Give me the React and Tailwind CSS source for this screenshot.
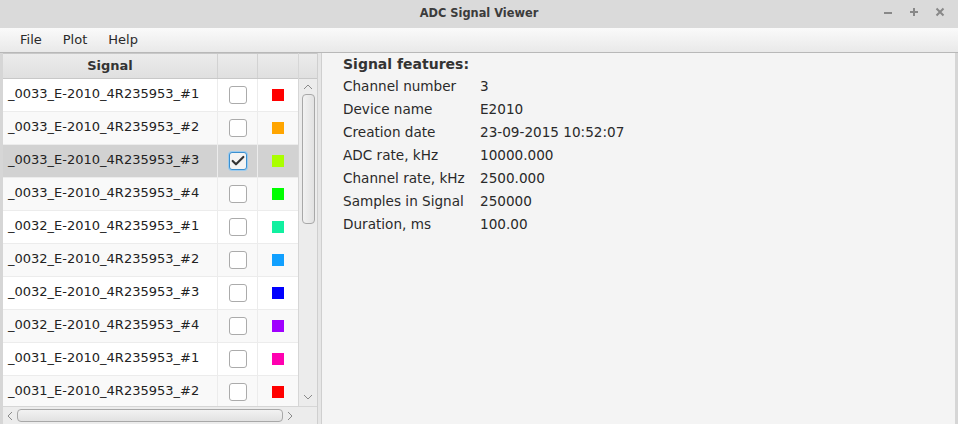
import { Check } from "lucide-react";

const signals = [
  { name: "_0033_E-2010_4R235953_#1", color: "#ff0000" },
  { name: "_0033_E-2010_4R235953_#2", color: "#ffa500" },
  { name: "_0033_E-2010_4R235953_#3", color: "#aaff00", selected: true },
  { name: "_0033_E-2010_4R235953_#4", color: "#00ff00" },
  { name: "_0032_E-2010_4R235953_#1", color: "#11f0a0" },
  { name: "_0032_E-2010_4R235953_#2", color: "#11a0ff" },
  { name: "_0032_E-2010_4R235953_#3", color: "#0000ff" },
  { name: "_0032_E-2010_4R235953_#4", color: "#a000ff" },
  { name: "_0031_E-2010_4R235953_#1", color: "#ff00b0" },
  { name: "_0031_E-2010_4R235953_#2", color: "#ff0000" },
];

const features = [
  ["Channel number", "3"],
  ["Device name", "E2010"],
  ["Creation date", "23-09-2015 10:52:07"],
  ["ADC rate, kHz", "10000.000"],
  ["Channel rate, kHz", "2500.000"],
  ["Samples in Signal", "250000"],
  ["Duration, ms", "100.00"],
];

const Chevron = ({ dir }) => {
  const d = {
    up: "M1 5 L5 1 L9 5",
    down: "M1 1 L5 5 L9 1",
    left: "M5 1 L1 5 L5 9",
    right: "M1 1 L5 5 L1 9",
  }[dir];
  const vertical = dir === "up" || dir === "down";
  return (
    <svg
      width={vertical ? 10 : 6}
      height={vertical ? 6 : 10}
      viewBox={vertical ? "0 0 10 6" : "0 0 6 10"}
      fill="none"
      stroke="#8a8a8a"
      strokeWidth="1"
    >
      <path d={d} />
    </svg>
  );
};

export default function App() {
  return (
    <div
      className="w-[958px] h-[424px] flex flex-col overflow-hidden bg-[#f2f2f2] text-[13px] text-[#222]"
      style={{ fontFamily: '"DejaVu Sans", sans-serif' }}
    >
      {/* Title bar */}
      <div className="h-[28px] shrink-0 flex items-center bg-[#dadada] relative">
        <div className="flex-1 text-center font-bold text-[11.4px] text-[#3c3c3c]">
          ADC Signal Viewer
        </div>
        <div className="absolute right-[12px] top-[6px] flex items-center gap-[14px] text-[#888] font-bold">
          <svg width="12" height="12" viewBox="0 0 12 12">
            <path d="M2 7 H10" stroke="#888" strokeWidth="2" />
          </svg>
          <svg width="12" height="12" viewBox="0 0 12 12">
            <path d="M2 6 H10 M6 2 V10" stroke="#888" strokeWidth="2" />
          </svg>
          <svg width="12" height="12" viewBox="0 0 12 12">
            <path d="M2.5 2.5 L9.5 9.5 M9.5 2.5 L2.5 9.5" stroke="#888" strokeWidth="2" />
          </svg>
        </div>
      </div>

      {/* Menu bar */}
      <div className="h-[25px] shrink-0 flex items-center gap-[21px] pl-[20px] bg-gradient-to-b from-[#fafafa] to-[#e9e9e9] border-b border-[#b8b8b8] text-[13px] text-[#2a2a2a]">
        <span>File</span>
        <span>Plot</span>
        <span>Help</span>
      </div>

      {/* Content */}
      <div className="flex-1 flex min-h-0">
        {/* Left table */}
        <div className="w-[317px] shrink-0 flex flex-col border-l-[3px] border-[#d6d6d6] bg-white">
          <div className="flex flex-1 min-h-0">
            <div className="w-[295px] flex flex-col">
              {/* Header */}
              <div className="h-[26px] shrink-0 flex bg-gradient-to-b from-[#ececec] to-[#e0e0e0] border-b border-[#c8c8c8] border-t border-t-[#c8c8c8]">
                <div className="w-[215px] flex items-center justify-center font-bold text-[#333] border-r border-[#d2d2d2]">
                  Signal
                </div>
                <div className="w-[40px] border-r border-[#d2d2d2]" />
                <div className="w-[40px]" />
              </div>
              {signals.map((s, i) => (
                <div
                  key={i}
                  className={`h-[33px] shrink-0 flex border-b border-[#ececec] ${
                    s.selected ? "bg-[#d2d2d2]" : i % 2 ? "bg-[#f9f9f9]" : "bg-white"
                  }`}
                >
                  <div className="w-[215px] flex items-center pl-[5px] pb-[2px] text-[13px] text-[#222] border-r border-[#ececec] whitespace-nowrap">
                    {s.name}
                  </div>
                  <div className="w-[40px] flex items-center justify-center border-r border-[#ececec]">
                    <div
                      className={`w-[18px] h-[18px] rounded-[3px] flex items-center justify-center ${
                        s.selected
                          ? "border border-[#3a8fd0] bg-[#f4f4f4] shadow-[0_0_0_1px_#9ccbee]"
                          : "border border-[#ababab] bg-white"
                      }`}
                    >
                      {s.selected && <Check size={16} strokeWidth={3.2} color="#333" />}
                    </div>
                  </div>
                  <div className="w-[40px] flex items-center justify-center">
                    <div className="w-[12px] h-[12px]" style={{ backgroundColor: s.color }} />
                  </div>
                </div>
              ))}
            </div>
            {/* Vertical scrollbar */}
            <div className="w-[19px] flex flex-col items-center bg-[#ececec] border-l border-[#d6d6d6]">
              <div className="h-[26px] w-full bg-gradient-to-b from-[#ececec] to-[#e0e0e0] border-b border-[#c8c8c8] border-t border-t-[#c8c8c8]" />
              <div className="h-[12px] flex items-center justify-center mt-[2px]">
                <Chevron dir="up" />
              </div>
              <div className="w-[13px] h-[130px] mt-[1px] rounded-[4px] border border-[#a8a8a8] bg-gradient-to-r from-[#f2f2f2] to-[#e2e2e2]" />
              <div className="flex-1" />
              <div className="h-[14px] flex items-center justify-center mb-[2px]">
                <Chevron dir="down" />
              </div>
            </div>
          </div>
          {/* Horizontal scrollbar */}
          <div className="h-[18px] shrink-0 flex items-center bg-[#ececec] border-t border-[#d6d6d6]">
            <div className="w-[14px] flex items-center justify-center">
              <Chevron dir="left" />
            </div>
            <div className="w-[266px] h-[13px] rounded-[4px] border border-[#a8a8a8] bg-gradient-to-b from-[#f2f2f2] to-[#e2e2e2]" />
            <div className="w-[14px] flex items-center justify-center">
              <Chevron dir="right" />
            </div>
            <div className="flex-1" />
          </div>
        </div>

        {/* Split divider */}
        <div className="w-[5px] shrink-0 bg-[#e6e6e6] border-x border-[#cfcfcf]" />

        {/* Right panel */}
        <div className="flex-1 bg-[#f4f4f4] border-r-[3px] border-[#d6d6d6] pl-[21px] pt-[1px]">
          <div className="font-bold text-[14px] text-[#333] h-[21px] flex items-center">
            Signal features:
          </div>
          {features.map(([k, v]) => (
            <div key={k} className="h-[23px] flex items-center text-[13.6px] text-[#2a2a2a]">
              <span className="w-[137px]">{k}</span>
              <span>{v}</span>
            </div>
          ))}
        </div>
      </div>
    </div>
  );
}
